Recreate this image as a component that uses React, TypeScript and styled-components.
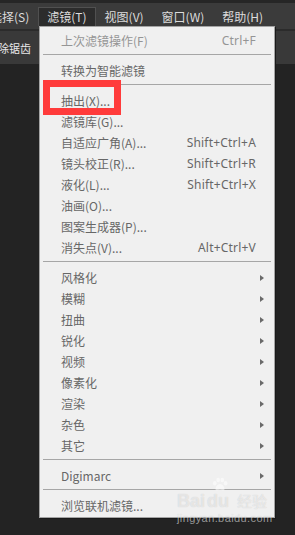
import React from 'react';
import styled, { createGlobalStyle } from 'styled-components';

type Entry =
  | { kind: 'item'; label: string; shortcut?: string; submenu?: boolean; disabled?: boolean; marked?: boolean }
  | { kind: 'sep' };

const entries: Entry[] = [
  { kind: 'item', label: '上次滤镜操作(F)', shortcut: 'Ctrl+F', disabled: true },
  { kind: 'sep' },
  { kind: 'item', label: '转换为智能滤镜' },
  { kind: 'sep' },
  { kind: 'item', label: '抽出(X)...', marked: true },
  { kind: 'item', label: '滤镜库(G)...' },
  { kind: 'item', label: '自适应广角(A)...', shortcut: 'Shift+Ctrl+A' },
  { kind: 'item', label: '镜头校正(R)...', shortcut: 'Shift+Ctrl+R' },
  { kind: 'item', label: '液化(L)...', shortcut: 'Shift+Ctrl+X' },
  { kind: 'item', label: '油画(O)...' },
  { kind: 'item', label: '图案生成器(P)...' },
  { kind: 'item', label: '消失点(V)...', shortcut: 'Alt+Ctrl+V' },
  { kind: 'sep' },
  { kind: 'item', label: '风格化', submenu: true },
  { kind: 'item', label: '模糊', submenu: true },
  { kind: 'item', label: '扭曲', submenu: true },
  { kind: 'item', label: '锐化', submenu: true },
  { kind: 'item', label: '视频', submenu: true },
  { kind: 'item', label: '像素化', submenu: true },
  { kind: 'item', label: '渲染', submenu: true },
  { kind: 'item', label: '杂色', submenu: true },
  { kind: 'item', label: '其它', submenu: true },
  { kind: 'sep' },
  { kind: 'item', label: 'Digimarc', submenu: true },
  { kind: 'sep' },
  { kind: 'item', label: '浏览联机滤镜...' },
];

const menus = [
  { label: '选择(S)' },
  { label: '滤镜(T)', open: true },
  { label: '视图(V)' },
  { label: '窗口(W)' },
  { label: '帮助(H)' },
];

const App = () => {
  return (
    <>
      <GlobalStyle />
      <Screen>
        <TopStrip />
        <MenuBar>
          {menus.map((m) => (
            <MenuTitle key={m.label} $open={!!m.open}>
              {m.label}
            </MenuTitle>
          ))}
        </MenuBar>
        <OptionsBar>
          <OptionLabel>消除锯齿</OptionLabel>
        </OptionsBar>
        <Workspace />

        <Dropdown>
          {entries.map((e, i) =>
            e.kind === 'sep' ? (
              <Separator key={i} />
            ) : (
              <Item key={i} $disabled={!!e.disabled}>
                <Label>
                  {e.label}
                  {e.marked && <Marker />}
                </Label>
                <Shortcut>{e.shortcut}</Shortcut>
                <ArrowCell>{e.submenu && <Arrow />}</ArrowCell>
              </Item>
            )
          )}
        </Dropdown>

        <Watermark>
          <LogoRow>
            <span>Bai</span>
            <Du>
              <Paw viewBox="0 0 24 18">
                <ellipse cx="5" cy="8" rx="2.4" ry="3" />
                <ellipse cx="9.5" cy="3.5" rx="2.4" ry="3" />
                <ellipse cx="15" cy="3.5" rx="2.4" ry="3" />
                <ellipse cx="19.5" cy="8" rx="2.4" ry="3" />
                <path d="M12 9c-3 0-6 4-6 6.5 0 2 2 2.2 3.2 1.8 1-.3 1.8-.5 2.8-.5s1.8.2 2.8.5c1.2.4 3.2.2 3.2-1.8C18 13 15 9 12 9z" />
              </Paw>
              du
            </Du>
            <Jingyan>经验</Jingyan>
          </LogoRow>
          <Domain>jingyan.baidu.com</Domain>
        </Watermark>
      </Screen>
    </>
  );
};

export default App;

const GlobalStyle = createGlobalStyle`
  html, body {
    margin: 0;
    padding: 0;
    background: #232323;
  }
  body {
    font-family: "Noto Sans CJK SC", "Noto Sans", sans-serif;
  }
`;

const Screen = styled.div`
  position: relative;
  width: 295px;
  height: 535px;
  overflow: hidden;
  background: #232323;
  display: flex;
  flex-direction: column;
`;

const TopStrip = styled.div`
  height: 3px;
  background: #262626;
`;

const MenuBar = styled.div`
  height: 26px;
  background: #3b3b3b;
  display: flex;
  align-items: center;
  margin-left: -19px;
  border-bottom: 2px solid #2b2b2b;
`;

const MenuTitle = styled.div<{ $open: boolean }>`
  height: 18px;
  line-height: 18px;
  padding: 0 8px;
  font-size: 12px;
  color: #dcdcdc;
  white-space: nowrap;
  background: ${(p) => (p.$open ? '#2c2c2c' : 'transparent')};
  border: 1px solid ${(p) => (p.$open ? '#505050' : 'transparent')};
  border-bottom: none;
`;

const OptionsBar = styled.div`
  height: 33px;
  background: #393939;
  display: flex;
  align-items: center;
  margin-left: -13px;
`;

const OptionLabel = styled.span`
  font-size: 11px;
  color: #e8e8e8;
  padding-top: 1px;
`;

const Workspace = styled.div`
  flex: 1;
  background: #232323;
`;

const Dropdown = styled.div`
  position: absolute;
  left: 39px;
  top: 26px;
  width: 234px;
  padding: 3px 0 1px;
  background: #f0f0f0;
  border: 1px solid #a4a4a4;
  box-shadow: 1px 1px 0 #1a1a1a;
`;

const Item = styled.div<{ $disabled: boolean }>`
  display: grid;
  grid-template-columns: 1fr auto 18px;
  align-items: center;
  height: 21px;
  padding-left: 21px;
  font-size: 12px;
  color: ${(p) => (p.$disabled ? '#959595' : '#676767')};
  white-space: nowrap;
`;

const Label = styled.span`
  position: relative;
  line-height: 21px;
`;

const Marker = styled.span`
  position: absolute;
  left: -18px;
  top: -10px;
  width: 64px;
  height: 21px;
  border: 7px solid #ff3b3b;
`;

const Shortcut = styled.span`
  font-family: "Noto Sans", "Liberation Sans", sans-serif;
  font-size: 12px;
  letter-spacing: 0.2px;
`;

const ArrowCell = styled.span`
  display: flex;
  align-items: center;
  padding-left: 4px;
`;

const Arrow = styled.span`
  width: 0;
  height: 0;
  border-top: 3.5px solid transparent;
  border-bottom: 3.5px solid transparent;
  border-left: 4px solid #6a6a6a;
`;

const Separator = styled.div`
  height: 1px;
  margin: 3px 3px 5px;
  background: #a6a6a6;
`;

const Watermark = styled.div`
  position: absolute;
  left: 177px;
  top: 480px;
  color: rgba(255, 255, 255, 0.55);
  text-shadow: 0 0 1px rgba(0, 0, 0, 0.18);
  pointer-events: none;
`;

const LogoRow = styled.div`
  display: flex;
  align-items: flex-end;
  font-family: "Liberation Sans", sans-serif;
  font-size: 18px;
  font-weight: bold;
  line-height: 18px;
  height: 30px;
`;

const Du = styled.span`
  position: relative;
  margin-left: 2px;
`;

const Paw = styled.svg`
  position: absolute;
  left: 4px;
  top: -15px;
  width: 18px;
  height: 14px;
  fill: rgba(255, 255, 255, 0.55);
`;

const Jingyan = styled.span`
  font-family: "Noto Sans CJK SC", sans-serif;
  font-size: 15px;
  font-weight: normal;
  margin-left: 8px;
`;

const Domain = styled.div`
  font-family: "Liberation Sans", sans-serif;
  font-size: 11px;
  margin-top: 2px;
  letter-spacing: 0.4px;
`;
